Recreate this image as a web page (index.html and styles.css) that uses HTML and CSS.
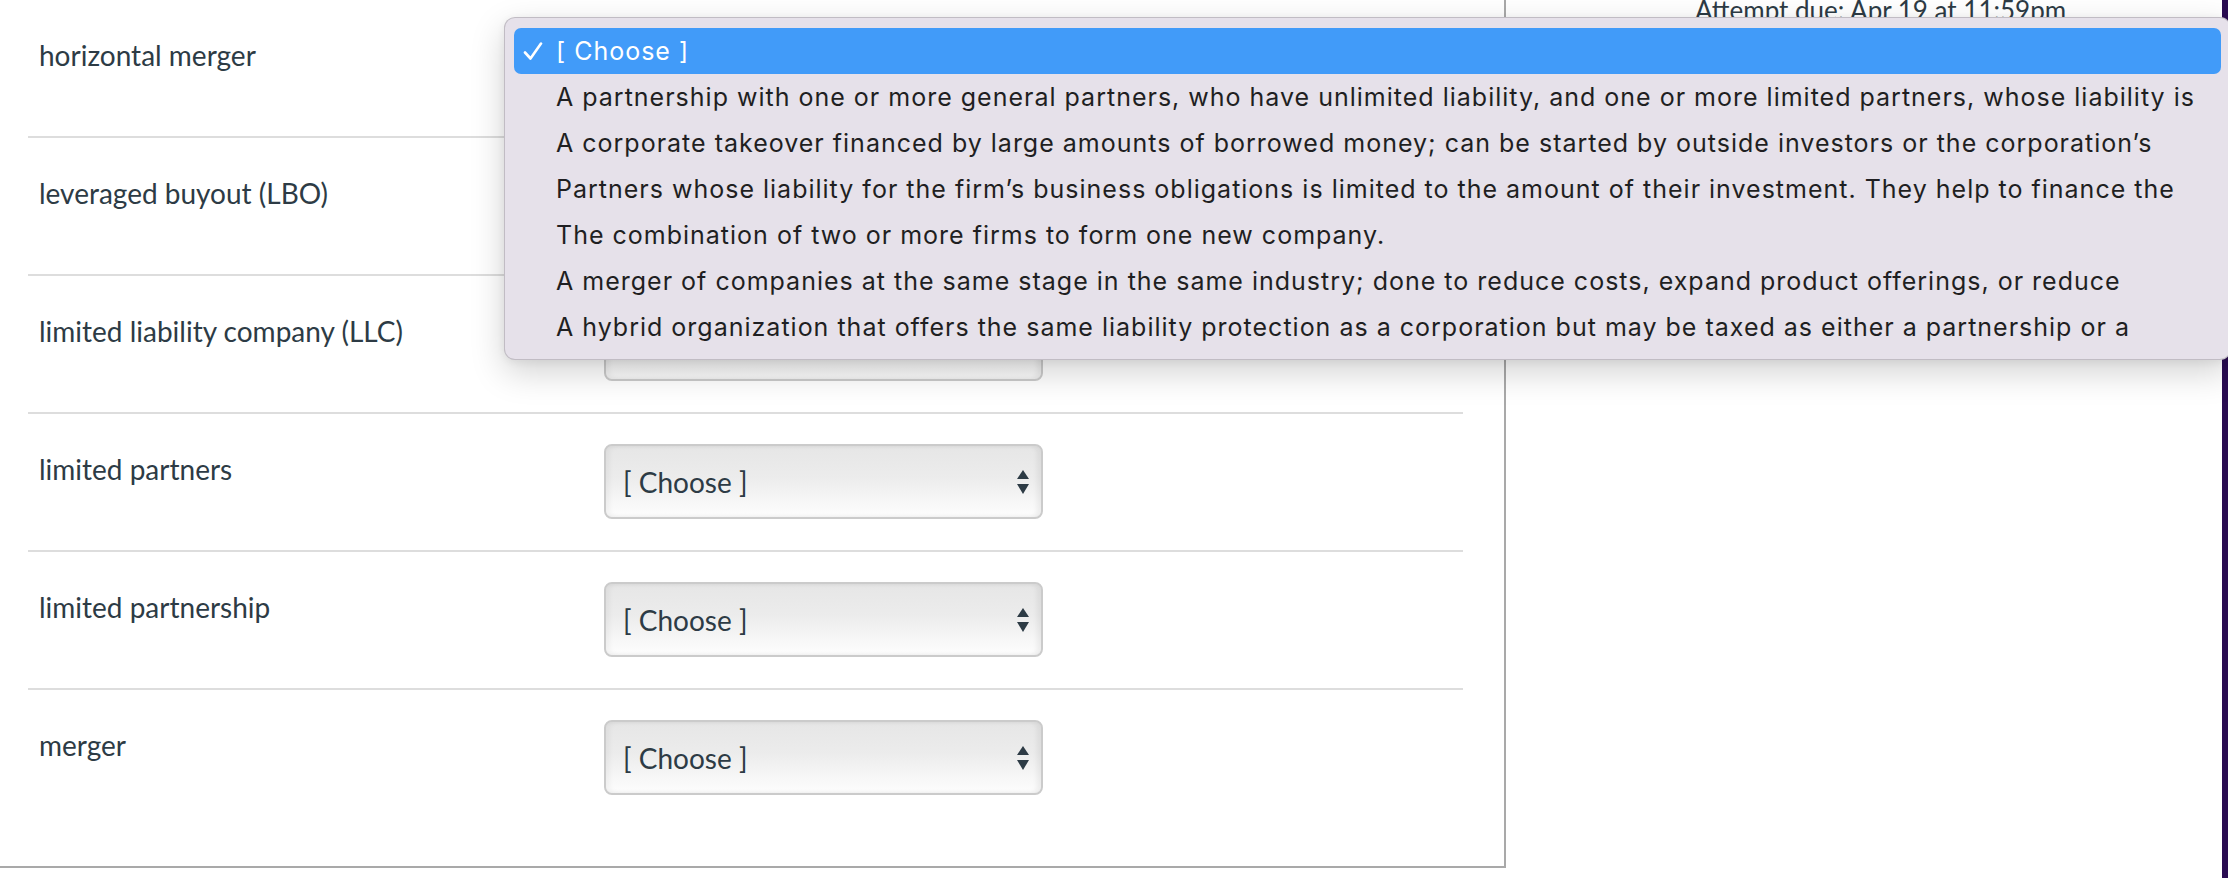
FILE: index.html
```html
<!DOCTYPE html>
<html lang="en">
<head>
<meta charset="utf-8">
<title>Quiz matching</title>
<link rel="stylesheet" href="styles.css">
</head>
<body>
<div class="page">
  <div class="quiz">
    <div class="row">
      <div class="term">horizontal merger</div>
      <div class="select"><span>[ Choose ]</span><svg class="arrows" width="12" height="24" viewBox="0 0 12 24"><polygon points="0,9 6,0 12,9"/><polygon points="0,14 12,14 6,24"/></svg></div>
    </div>
    <div class="row">
      <div class="term">leveraged buyout (LBO)</div>
      <div class="select"><span>[ Choose ]</span><svg class="arrows" width="12" height="24" viewBox="0 0 12 24"><polygon points="0,9 6,0 12,9"/><polygon points="0,14 12,14 6,24"/></svg></div>
    </div>
    <div class="row">
      <div class="term">limited liability company (LLC)</div>
      <div class="select"><span>[ Choose ]</span><svg class="arrows" width="12" height="24" viewBox="0 0 12 24"><polygon points="0,9 6,0 12,9"/><polygon points="0,14 12,14 6,24"/></svg></div>
    </div>
    <div class="row">
      <div class="term">limited partners</div>
      <div class="select"><span>[ Choose ]</span><svg class="arrows" width="12" height="24" viewBox="0 0 12 24"><polygon points="0,9 6,0 12,9"/><polygon points="0,14 12,14 6,24"/></svg></div>
    </div>
    <div class="row">
      <div class="term">limited partnership</div>
      <div class="select"><span>[ Choose ]</span><svg class="arrows" width="12" height="24" viewBox="0 0 12 24"><polygon points="0,9 6,0 12,9"/><polygon points="0,14 12,14 6,24"/></svg></div>
    </div>
    <div class="row">
      <div class="term">merger</div>
      <div class="select"><span>[ Choose ]</span><svg class="arrows" width="12" height="24" viewBox="0 0 12 24"><polygon points="0,9 6,0 12,9"/><polygon points="0,14 12,14 6,24"/></svg></div>
    </div>
  </div>
  <aside class="side">
    <div class="due">Attempt due: Apr 19 at 11:59pm</div>
  </aside>
  <div class="edge"></div>
</div>

<div class="menu">
  <div class="opt sel"><svg class="check" width="20" height="18" viewBox="0 0 20 18"><path d="M2 10.5 L7.5 16.5 L18 1.5" fill="none" stroke="#fff" stroke-width="2.6" stroke-linecap="round" stroke-linejoin="round"/></svg>[ Choose ]</div>
  <div class="opt">A partnership with one or more general partners, who have unlimited liability, and one or more limited partners, whose liability is</div>
  <div class="opt">A corporate takeover financed by large amounts of borrowed money; can be started by outside investors or the corporation’s</div>
  <div class="opt">Partners whose liability for the firm’s business obligations is limited to the amount of their investment. They help to finance the</div>
  <div class="opt">The combination of two or more firms to form one new company.</div>
  <div class="opt">A merger of companies at the same stage in the same industry; done to reduce costs, expand product offerings, or reduce</div>
  <div class="opt">A hybrid organization that offers the same liability protection as a corporation but may be taxed as either a partnership or a</div>
</div>
</body>
</html>
```

FILE: styles.css
```css
html, body {
  margin: 0;
  padding: 0;
  background: #ffffff;
}

body {
  width: 2228px;
  height: 878px;
  overflow: hidden;
  position: relative;
  font-family: Lato, "Open Sans", sans-serif;
  color: #2d3b45;
}

.page {
  display: flex;
  align-items: flex-start;
  height: 878px;
}

.quiz {
  width: 1504px;
  flex: 0 0 auto;
  border-right: 2px solid #a9a9a9;
  border-bottom: 2px solid #a9a9a9;
  padding-bottom: 40px;
}

.row {
  margin: 0 41px 0 28px;
  height: 136px;
  border-bottom: 2px solid #dddddd;
  display: grid;
  grid-template-columns: 576px 439px;
  align-items: start;
}

.row:last-child {
  border-bottom: none;
}

.term {
  padding: 37px 0 0 11px;
  font-size: 28px;
  line-height: 36px;
  color: #2d3b45;
}

.select {
  margin-top: 30px;
  height: 75px;
  box-sizing: border-box;
  border: 2px solid #cbcbcb;
  border-radius: 8px;
  background: linear-gradient(#e6e6e6 0%, #ececec 45%, #f6f6f6 75%, #fdfdfd 100%);
  box-shadow: inset 4px 0 5px rgba(0, 0, 0, 0.04), inset -4px 0 5px rgba(0, 0, 0, 0.06);
  display: flex;
  align-items: center;
  justify-content: space-between;
  padding: 0 12px 0 17px;
  font-size: 28px;
  color: #2d3b45;
}

.select span {
  line-height: 1;
}

.arrows {
  fill: #2d3b45;
  display: block;
}

.side {
  flex: 1 1 auto;
  height: 878px;
}

.due {
  margin: -5px 0 0 189px;
  font-size: 26px;
  line-height: 30px;
  white-space: nowrap;
  color: #2d3b45;
}

.edge {
  width: 6px;
  flex: 0 0 6px;
  height: 878px;
  background: #2a0c52;
}

.menu {
  position: absolute;
  left: 504px;
  top: 17px;
  width: 1727px;
  height: 343px;
  box-sizing: border-box;
  padding: 10px 9px;
  background: #e6e1ea;
  border: 1px solid rgba(0, 0, 0, 0.16);
  border-radius: 11px;
  box-shadow: 0 12px 34px rgba(0, 0, 0, 0.18), 0 2px 8px rgba(0, 0, 0, 0.06);
  font-family: Inter, "Noto Sans", sans-serif;
  font-size: 25px;
  letter-spacing: 1px;
  color: #1f1f22;
  overflow: hidden;
}

.opt {
  position: relative;
  height: 46px;
  display: flex;
  align-items: center;
  padding-left: 42px;
  white-space: nowrap;
  border-radius: 7px;
}

.opt.sel {
  background: #419bf9;
  color: #ffffff;
}

.check {
  position: absolute;
  left: 9px;
  top: 14px;
}
```
